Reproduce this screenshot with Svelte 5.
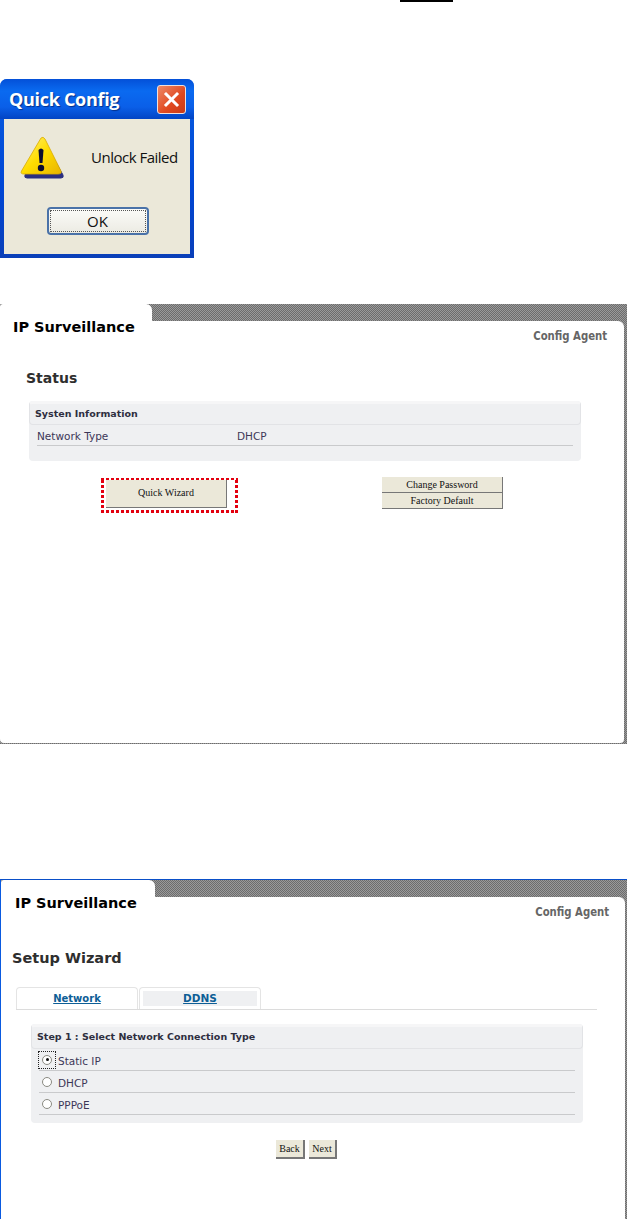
<script>
  const rows2 = [
    { label: 'Static IP', checked: true },
    { label: 'DHCP', checked: false },
    { label: 'PPPoE', checked: false }
  ];
</script>

<div class="page">
  <div class="rule"></div>

  <section class="dialog">
    <header class="titlebar">
      <span class="title">Quick Config</span>
      <span class="close">
        <svg width="17" height="17" viewBox="0 0 17 17"><path d="M3 3 L14 14 M14 3 L3 14" stroke="#fff" stroke-width="3" stroke-linecap="square"/></svg>
      </span>
    </header>
    <div class="dlg-body">
      <div class="dlg-msg">
        <svg class="warn" width="46" height="46" viewBox="0 0 46 46">
          <defs>
            <linearGradient id="wg" x1="0" y1="0" x2="1" y2="1">
              <stop offset="0" stop-color="#fff27a"/>
              <stop offset="0.5" stop-color="#ffdc00"/>
              <stop offset="1" stop-color="#e8b400"/>
            </linearGradient>
          </defs>
          <path d="M24 5 L43 39 Q44 42 41 42 L7 42 Q4 42 5 39 Z" fill="#2b2f80" stroke="#2b2f80" stroke-linejoin="round"/>
          <path d="M21 2 Q23 0 25 3 L41 35 Q42 38 38 38 L4 38 Q0 38 1.500 35 Z" fill="url(#wg)" stroke="#d9ab00" stroke-width="0.800"/>
          <path d="M18.500 14 Q21 11 23.500 14 L22.500 27 L19.500 27 Z" fill="#0c0c30"/>
          <circle cx="21" cy="32" r="3.200" fill="#0c0c30"/>
        </svg>
        <span class="msg">Unlock Failed</span>
      </div>
      <button class="ok"><span>OK</span></button>
    </div>
  </section>

  <section class="panel p1">
    <div class="head"><div class="tab"></div></div>
    <div class="body">
      <div class="top">
        <span class="brand">IP Surveillance</span>
        <span class="agent">Config Agent</span>
      </div>
      <h2 class="status">Status</h2>
      <div class="card c1">
        <div class="card-head">Systen Information</div>
        <div class="row info"><span class="k">Network Type</span><span>DHCP</span></div>
      </div>
      <div class="actions">
        <div class="wizard-mark"><button class="xbtn wizard">Quick Wizard</button></div>
        <div class="stack">
          <button class="xbtn small">Change Password</button>
          <button class="xbtn small">Factory Default</button>
        </div>
      </div>
    </div>
  </section>

  <section class="panel p2">
    <div class="head"><div class="tab"></div></div>
    <div class="body">
      <div class="top">
        <span class="brand">IP Surveillance</span>
        <span class="agent">Config Agent</span>
      </div>
      <h2 class="wiz">Setup Wizard</h2>
      <div class="tabs">
        <a class="t active" href="#net">Network</a>
        <a class="t" href="#ddns"><span>DDNS</span></a>
      </div>
      <div class="card c2">
        <div class="card-head">Step 1 : Select Network Connection Type</div>
        {#each rows2 as r}
          <div class="row opt">
            <span class="radio-wrap" class:focus={r.checked}><span class="radio" class:on={r.checked}></span></span>
            <span>{r.label}</span>
          </div>
        {/each}
      </div>
      <div class="nav">
        <button class="xbtn nb">Back</button>
        <button class="xbtn nb">Next</button>
      </div>
    </div>
  </section>
</div>

<style>
  :global(body) { margin: 0; background: #fff; }
  .page { width: 627px; height: 1219px; overflow: hidden; display: flex; flex-direction: column; font-family: "DejaVu Sans", sans-serif; }
  .rule { width: 53px; height: 2px; background: #000; margin-left: 400px; }

  .dialog { width: 194px; height: 179px; margin-top: 77px; box-sizing: border-box; background: linear-gradient(#0a5fe0, #0046d5 60%, #0a3fb8); border-radius: 7px 7px 0 0; display: flex; flex-direction: column; flex: none; }
  .titlebar { height: 40px; display: flex; align-items: center; justify-content: space-between; padding: 0 8px 0 9px; background: linear-gradient(#0450d8, #0a6af0 30%, #0a5fe8 70%, #0244c4); border-radius: 7px 7px 0 0; }
  .title { color: #fff; font: bold 18px "Open Sans", sans-serif; text-shadow: 1px 1px 1px #03308c; letter-spacing: -0.300px; }
  .close { width: 27px; height: 27px; border: 1px solid #f0e0dc; border-radius: 3px; background: linear-gradient(135deg, #ee8a68, #e0481f 60%, #c83a18); display: flex; align-items: center; justify-content: center; }
  .dlg-body { flex: 1; margin: 0 4px 4px; background: #ebe8d9; display: flex; flex-direction: column; align-items: center; }
  .dlg-msg { width: 100%; display: flex; align-items: flex-start; height: 88px; }
  .warn { margin: 17px 0 0 16px; flex: none; }
  .msg { margin: 28px 0 0 25px; font: 15px "Open Sans", sans-serif; letter-spacing: -0.500px; color: #111; white-space: nowrap; }
  .ok { width: 102px; height: 28px; padding: 0; border: 2px solid #4a72a8; border-radius: 4px; background: linear-gradient(#fbfbf8, #ecebe3); font: 15px "Open Sans", sans-serif; color: #111; display: flex; align-items: center; justify-content: center; margin-left: 1px; outline: 1px dotted #555; outline-offset: -4px; }

  .panel { width: 627px; flex: none; box-sizing: border-box; display: flex; flex-direction: column; background: repeating-conic-gradient(#6c6c6c 0 25%, #9a9a9a 0 50%) 0 0 / 2px 2px; }
  .p1 { height: 440px; margin-top: 46px; padding: 0 3px 1px 0; }
  .p2 { height: 340px; margin-top: 135px; padding: 0 2px 0 0; border-top: 1px solid #0a4fc8; border-left: 1px solid #0a5ae0; }
  .head { height: 17px; display: flex; flex: none; }
  .tab { width: 152px; background: #fff; border-radius: 3px 6px 0 0; }
  .p2 .tab { width: 154px; }
  .body { flex: 1; background: #fff; display: flex; flex-direction: column; }
  .p1 .body { border-radius: 0 6px 4px 4px; }
  .p2 .body { border-radius: 0 6px 0 0; }
  .top { display: flex; justify-content: space-between; align-items: flex-start; margin: -3px 17px 0 13px; height: 24px; }
  .p2 .top { margin: -3px 16px 0 14px; }
  .brand { font-size: 14.500px; font-weight: 700; line-height: 18px; color: #000; white-space: nowrap; }
  .agent { font-stretch: condensed; font-weight: 700; font-size: 12.500px; color: #666; line-height: 16px; margin-top: 10px; transform: scaleX(0.9); transform-origin: right center; white-space: nowrap; }
  h2 { margin: 0; font-size: 14px; font-weight: 700; color: #2e2e2e; line-height: 18px; }
  .status { margin: 27px 0 0 26px; }
  .wiz { margin: 31px 0 0 11px; font-size: 14.500px; }

  .card { background: #eff0f2; border-radius: 4px; font-size: 10.500px; color: #3c3758; display: flex; flex-direction: column; box-sizing: border-box; }
  .card-head { font-size: 9.500px; font-weight: 700; height: 24px; line-height: 19px; box-sizing: border-box; padding-left: 5px; color: #2e2e40; border: 1px solid #e2e3e6; border-top: 3px solid #f6f6f7; border-radius: 4px; }
  .c1 { width: 552px; height: 60px; margin: 14px 0 0 29px; }
  .c2 { width: 552px; height: 99px; margin: 14px 0 0 30px; }
  .c2 .card-head { height: 25px; }
  .row { display: flex; align-items: center; margin: 0 8px; border-bottom: 1px solid #c9cacc; box-sizing: border-box; }
  .info { height: 21px; padding-top: 1px; }
  .k { width: 200px; }
  .opt { height: 22px; gap: 2px; padding-top: 3px; }
  .radio-wrap { width: 18px; height: 18px; display: flex; align-items: center; justify-content: center; box-sizing: border-box; border: 1px dotted transparent; margin-left: -1px; margin-top: -3px; }
  .radio-wrap.focus { border-color: #222; }
  .radio { width: 10px; height: 10px; border-radius: 50%; background: #fff; border: 1px solid #8a8a82; box-sizing: border-box; position: relative; }
  .radio.on::after { content: ""; position: absolute; left: 2.500px; top: 2.500px; width: 3px; height: 3px; border-radius: 50%; background: #111; }

  .xbtn { padding: 0; background: #ebe8d9; font-family: "Liberation Serif", serif; color: #111; border: 0; border-right: 1px solid #777; border-bottom: 1px solid #777; white-space: nowrap; font-size: 10px; }
  .actions { display: flex; margin: 17px 0 0 0; align-items: flex-start; }
  .wizard-mark {
    margin-left: 101px; padding: 2px 11px 5px 5px; width: 137px; height: 35px; box-sizing: border-box; display: flex;
    background:
      repeating-linear-gradient(90deg, #e3000f 0 3px, transparent 3px 5px) 0 0 / 100% 2px no-repeat,
      repeating-linear-gradient(90deg, #e3000f 0 3px, transparent 3px 5px) 0 100% / 100% 3px no-repeat,
      repeating-linear-gradient(0deg, #e3000f 0 3px, transparent 3px 5px) 0 0 / 3px 100% no-repeat,
      repeating-linear-gradient(0deg, #e3000f 0 3px, transparent 3px 5px) 100% 0 / 3px 100% no-repeat;
  }
  .wizard { width: 121px; height: 28px; padding-bottom: 2px; }
  .stack { margin-left: 144px; display: flex; flex-direction: column; width: 121px; margin-top: -1px; }
  .small { height: 16px; width: 121px; line-height: 14px; }

  .tabs { display: flex; margin: 20px 28px 0 15px; border-bottom: 1px solid #dcdcdc; height: 23px; gap: 1px; box-sizing: border-box; flex: none; }
  .t { width: 122px; box-sizing: border-box; height: 22px; border: 1px solid #e4e4e4; border-bottom: 0; border-radius: 4px 4px 0 0; font-size: 10px; font-weight: 700; color: #0d5e96; text-align: center; line-height: 21px; }
  .t:not(.active) { padding: 3px; line-height: 15px; font-size: 10.500px; }
  .t:not(.active) span { display: block; background: #eff0f2; height: 15px; }

  .nav { display: flex; gap: 4px; margin: 17px 0 0 275px; }
  .nb { height: 19px; width: 29px; border-right-width: 2px; border-bottom-width: 2px; box-sizing: border-box; }
  .nb + .nb { width: 28px; }
</style>
